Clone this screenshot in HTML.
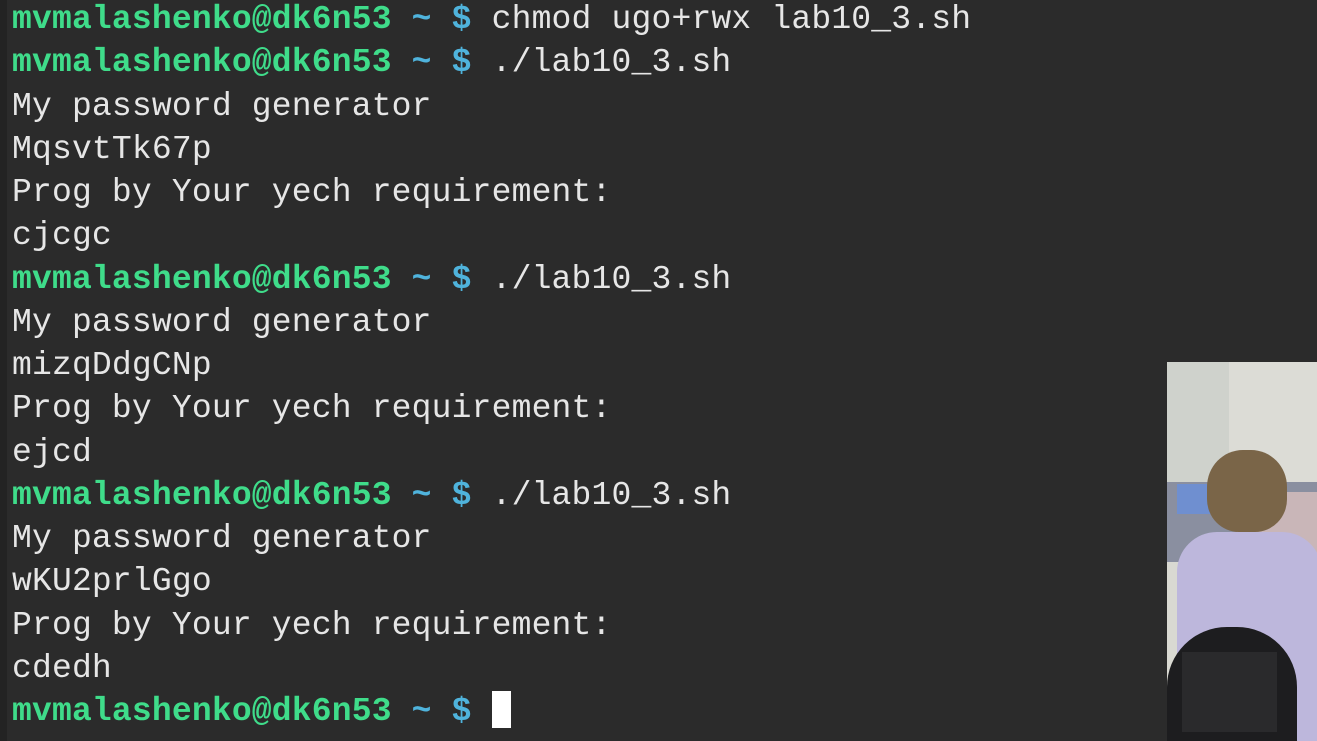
<!DOCTYPE html>
<html><head><meta charset="utf-8"><style>
html,body{margin:0;padding:0;width:1317px;height:741px;overflow:hidden;background:#2b2b2b;}
.left{position:absolute;left:0;top:0;width:7px;height:741px;background:#232323;}
.t{position:absolute;left:12px;top:-2px;font-family:"Liberation Mono",monospace;font-size:33px;line-height:43.25px;color:#e6e6e6;white-space:pre;letter-spacing:0.18px;}
.g{color:#3fdc8a;font-weight:bold;}
.b{color:#4fb3dc;font-weight:bold;}
.cur{display:inline-block;width:19px;height:37px;background:#fff;vertical-align:-8px;}
.cam{position:absolute;left:1167px;top:362px;width:150px;height:379px;overflow:hidden;background:#d9d9d2;}
</style></head><body>
<div class="left"></div>
<div class="t"><span class="g">mvmalashenko@dk6n53</span> <span class="b">~ $</span> chmod ugo+rwx lab10_3.sh
<span class="g">mvmalashenko@dk6n53</span> <span class="b">~ $</span> ./lab10_3.sh
My password generator
MqsvtTk67p
Prog by Your yech requirement:
cjcgc
<span class="g">mvmalashenko@dk6n53</span> <span class="b">~ $</span> ./lab10_3.sh
My password generator
mizqDdgCNp
Prog by Your yech requirement:
ejcd
<span class="g">mvmalashenko@dk6n53</span> <span class="b">~ $</span> ./lab10_3.sh
My password generator
wKU2prlGgo
Prog by Your yech requirement:
cdedh
<span class="g">mvmalashenko@dk6n53</span> <span class="b">~ $</span> <span class="cur"></span></div>
<div class="cam">
<div style="position:absolute;left:0;top:0;width:62px;height:120px;background:#cfd2cc"></div>
<div style="position:absolute;left:62px;top:0;width:88px;height:120px;background:#dcdcd6"></div>
<div style="position:absolute;left:0;top:120px;width:150px;height:80px;background:#8a8fa0"></div>
<div style="position:absolute;left:10px;top:122px;width:45px;height:30px;background:#6f8fd0"></div>
<div style="position:absolute;left:70px;top:130px;width:80px;height:70px;background:#c9b6b8"></div>
<div style="position:absolute;left:40px;top:88px;width:80px;height:82px;border-radius:45% 45% 40% 40%;background:#7a6548"></div>
<div style="position:absolute;left:10px;top:170px;width:145px;height:220px;border-radius:40px 40px 0 0;background:#bdb7dc"></div>
<div style="position:absolute;left:0;top:265px;width:130px;height:115px;border-radius:60px 60px 0 0;background:#1d1d1f"></div>
<div style="position:absolute;left:15px;top:290px;width:95px;height:80px;background:#2a2a2c"></div>
</div>
</body></html>
